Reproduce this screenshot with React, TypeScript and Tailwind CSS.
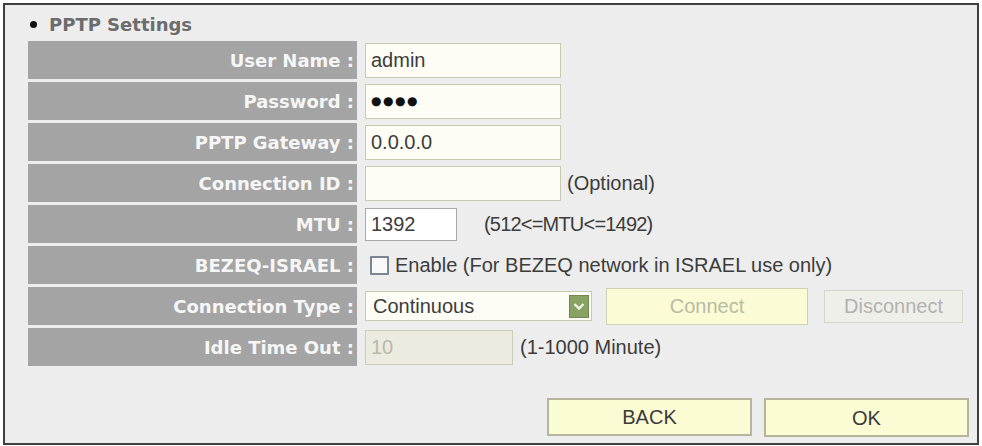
import React from 'react';

/**
 * PPTP settings panel of a router admin page.
 */

const labelFont = { fontFamily: '"DejaVu Sans", sans-serif' };

interface RowProps {
  label: string;
  children: React.ReactNode;
}

function Row({ label, children }: RowProps) {
  return (
    <div className="flex h-[38px]">
      <div
        className="w-[329px] shrink-0 bg-[#a4a4a4] flex items-center justify-end pr-[3px] text-[18px] font-bold text-[#f6f6f6]"
        style={labelFont}
      >
        {label}
      </div>
      <div className="flex items-center pl-[8px] text-[20px] text-[#3c3c3c]">{children}</div>
    </div>
  );
}

function TextBox({ value, width = 'w-[196px]' }: { value?: React.ReactNode; width?: string }) {
  return (
    <div
      className={`${width} h-[35px] bg-[#fdfdf6] border border-[#c6cab0] flex items-center pl-[5px] text-[20px] text-[#3c3c3c]`}
    >
      {value}
    </div>
  );
}

export default function App() {
  return (
    <div
      className="w-[982px] h-[446px] bg-white pt-[3px] pl-[3px]"
      style={{ fontFamily: '"Liberation Sans", Arial, sans-serif' }}
    >
      <div className="w-[976px] h-[442px] border-2 border-[#3f3f3f] bg-[#ededed] flex flex-col">
        {/* heading */}
        <div className="h-[36px] flex items-center pl-[25px] pt-[3px] gap-[12px]">
          <span className="w-[7px] h-[7px] rounded-full bg-[#111]" />
          <span className="text-[18px] font-bold text-[#6c6c6c]" style={labelFont}>
            PPTP Settings
          </span>
        </div>

        <div className="flex flex-col gap-[3px] pl-[23px]">
          <Row label="User Name :">
            <TextBox value="admin" />
          </Row>
          <Row label="Password :">
            <TextBox
              value={
                <span className="text-[12px] tracking-[1.5px] text-[#111]" style={labelFont}>
                  ●●●●
                </span>
              }
            />
          </Row>
          <Row label="PPTP Gateway :">
            <TextBox value="0.0.0.0" />
          </Row>
          <Row label="Connection ID :">
            <TextBox />
            <span className="ml-[6px]">(Optional)</span>
          </Row>
          <Row label="MTU :">
            <div className="w-[92px] h-[33px] bg-white border border-[#a9a9a9] flex items-center pl-[5px]">
              1392
            </div>
            <span className="ml-[27px] tracking-[-0.8px]">(512&lt;=MTU&lt;=1492)</span>
          </Row>
          <Row label="BEZEQ-ISRAEL :">
            <span className="ml-[5px] w-[19px] h-[19px] border-2 border-[#7c8591] bg-[#f9f9f9] rounded-[1px]" />
            <span className="ml-[6px]">Enable (For BEZEQ network in ISRAEL use only)</span>
          </Row>
          <Row label="Connection Type :">
            <div className="w-[227px] h-[30px] bg-[#fdfdf6] border border-[#c6cab0] flex items-center justify-between pl-[7px] pr-[2px]">
              <span>Continuous</span>
              <span className="w-[20px] h-[23px] bg-[#87a263] border border-[#6f8a50] flex items-center justify-center">
                <svg width="12" height="9" viewBox="0 0 12 9">
                  <path d="M1.5 2 L6 6.5 L10.5 2" fill="none" stroke="#eef5e2" strokeWidth="2.4" />
                </svg>
              </span>
            </div>
            <div className="ml-[14px] w-[202px] h-[37px] bg-[#fbfbd6] border border-[#cfd0b4] flex items-center justify-center text-[#b9bba2]">
              Connect
            </div>
            <div className="ml-[16px] w-[139px] h-[33px] bg-[#efefea] border border-[#d4d4cc] flex items-center justify-center text-[#b2b2ae]">
              Disconnect
            </div>
          </Row>
          <Row label="Idle Time Out :">
            <div className="w-[148px] h-[35px] bg-[#ebebe0] border border-[#cacdb8] flex items-center pl-[5px] text-[#b9b9aa]">
              10
            </div>
            <span className="ml-[7px]">(1-1000 Minute)</span>
          </Row>
        </div>

        <div className="flex justify-end gap-[12px] pr-[8px] mt-[32px] text-[20px] text-[#3a3a3a]">
          <div className="w-[205px] h-[38px] bg-[#fbfbd4] border-2 border-[#b4b59c] flex items-center justify-center">
            BACK
          </div>
          <div className="w-[205px] h-[39px] bg-[#fbfbd4] border-2 border-[#b4b59c] flex items-center justify-center">
            OK
          </div>
        </div>
      </div>
    </div>
  );
}
